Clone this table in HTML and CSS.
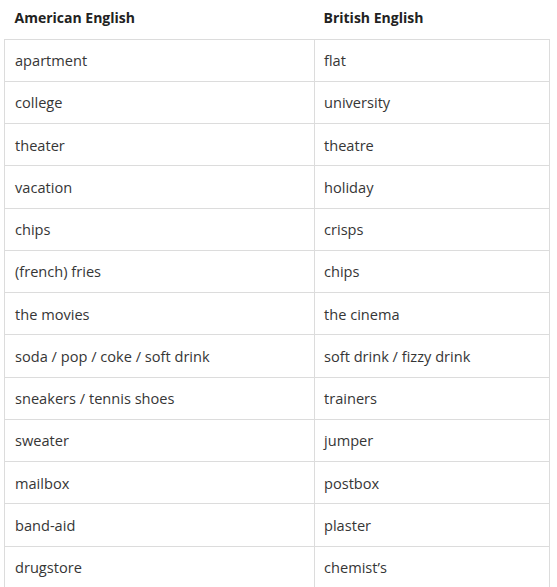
FILE: index.html
```html
<!DOCTYPE html>
<html lang="en">
<head>
<meta charset="utf-8">
<link rel="stylesheet" href="styles.css">
</head>
<body>
<div class="wrap">
<table class="words">
<thead>
<tr><th class="c1">American English</th><th class="c2">British English</th></tr>
</thead>
<tbody>
<tr><td>apartment</td><td>flat</td></tr>
<tr><td>college</td><td>university</td></tr>
<tr><td>theater</td><td>theatre</td></tr>
<tr><td>vacation</td><td>holiday</td></tr>
<tr><td>chips</td><td>crisps</td></tr>
<tr><td>(french) fries</td><td>chips</td></tr>
<tr><td>the movies</td><td>the cinema</td></tr>
<tr><td>soda / pop / coke / soft drink</td><td>soft drink / fizzy drink</td></tr>
<tr><td>sneakers / tennis shoes</td><td>trainers</td></tr>
<tr><td>sweater</td><td>jumper</td></tr>
<tr><td>mailbox</td><td>postbox</td></tr>
<tr><td>band-aid</td><td>plaster</td></tr>
<tr><td>drugstore</td><td>chemist’s</td></tr>
</tbody>
</table>
</div>
</body>
</html>
```

FILE: styles.css
```css
html, body {
  margin: 0;
  padding: 0;
  background: #fff;
}
.wrap {
  padding: 0 0 0 4px;
}
.words {
  width: 546px;
  border-collapse: collapse;
  table-layout: fixed;
  font-family: "Open Sans", "Noto Sans", sans-serif;
  font-size: 14.6px;
  color: #363636;
}
.words th {
  text-align: left;
  font-weight: 700;
  font-size: 14px;
  color: #222;
  height: 39px;
  padding: 0 10px 4px;
  box-sizing: border-box;
  border: none;
}
.words th.c1 {
  width: 310px;
}
.words th.c2 {
  padding-left: 9px;
}
.words td {
  height: 41.25px;
  padding: 0 10px;
  border: 1px solid #dcdcdc;
}
.words td + td {
  padding-left: 9px;
}
```
